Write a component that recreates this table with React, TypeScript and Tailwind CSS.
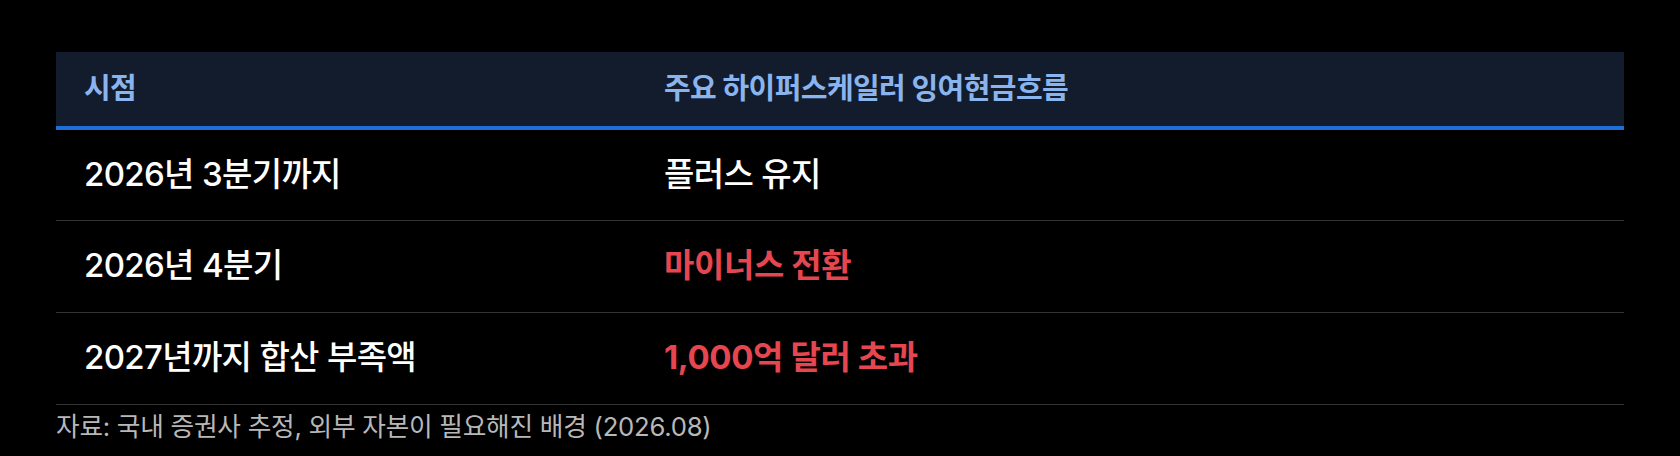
const rows = [
  { label: '2026년 3분기까지', value: '플러스 유지', alert: false },
  { label: '2026년 4분기', value: '마이너스 전환', alert: true },
  { label: '2027년까지 합산 부족액', value: '1,000억 달러 초과', alert: true },
]

export default function App() {
  return (
    <div className="min-h-screen bg-black px-[56px] pt-[52px] font-['Inter','Noto_Sans_CJK_KR',sans-serif]">
      <table className="w-full border-collapse text-left">
        <thead>
          <tr className="bg-[#131c2c] border-b-4 border-[#1f6fd8]">
            <th className="w-[580px] h-[76px] px-[28px] text-[29px] font-bold tracking-[-0.02em] text-[#8ab4ee]">
              시점
            </th>
            <th className="h-[76px] px-[28px] text-[29px] font-bold tracking-[-0.02em] text-[#8ab4ee]">
              주요 하이퍼스케일러 잉여현금흐름
            </th>
          </tr>
        </thead>
        <tbody>
          {rows.map((r) => (
            <tr key={r.label} className="border-b border-[#333333]">
              <td className="h-[92px] px-[28px] text-[33px] font-medium tracking-[-0.02em] text-white">
                {r.label}
              </td>
              <td
                className={
                  r.alert
                    ? 'h-[92px] px-[28px] text-[33px] font-bold tracking-[-0.012em] text-[#e5464f]'
                    : 'h-[92px] px-[28px] text-[33px] font-medium tracking-[-0.02em] text-white'
                }
              >
                {r.value}
              </td>
            </tr>
          ))}
        </tbody>
      </table>
      <p className="pt-[4px] text-[25.7px] leading-[36px] tracking-[-0.01em] text-[#b8b8b8]">
        자료: 국내 증권사 추정, 외부 자본이 필요해진 배경 (2026.08)
      </p>
    </div>
  )
}
